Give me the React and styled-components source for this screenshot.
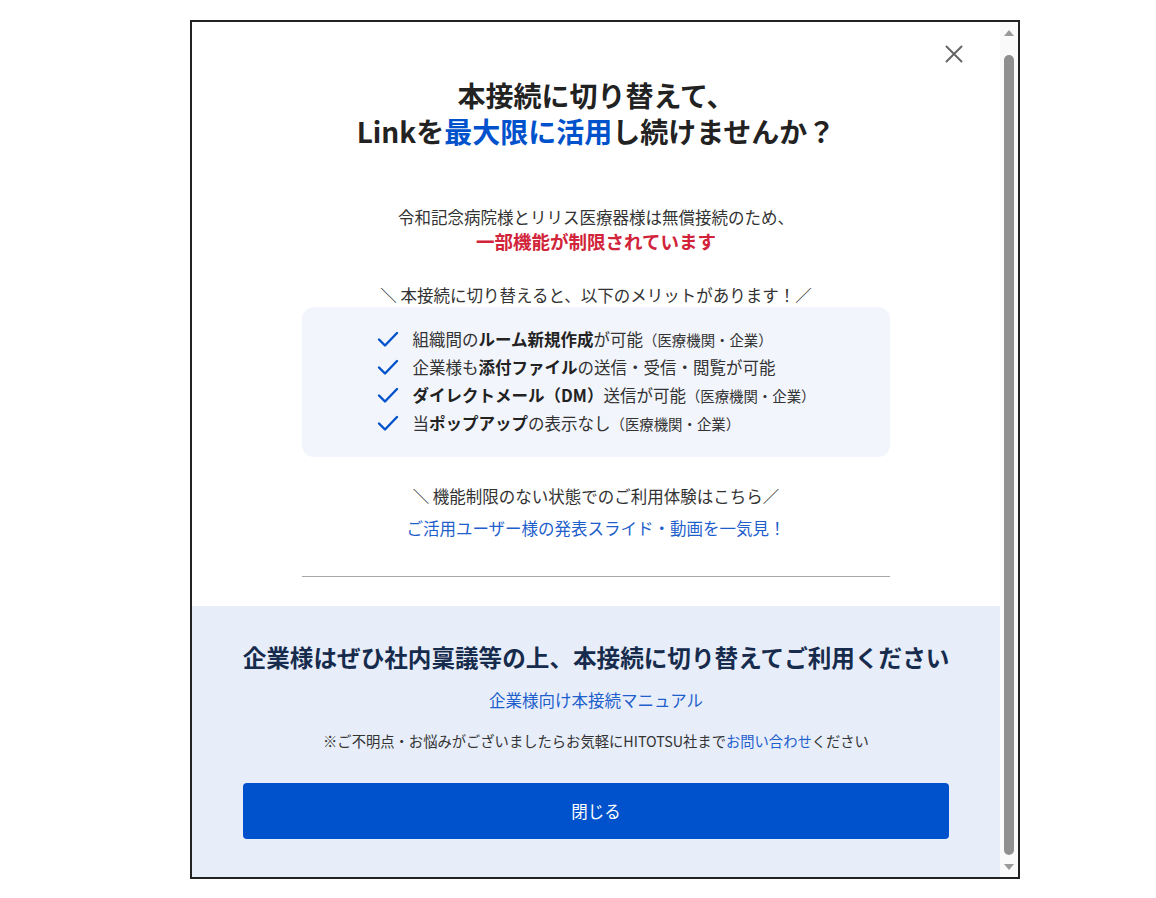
import React from "react";
import styled, { createGlobalStyle } from "styled-components";

const Global = createGlobalStyle`
  html, body { margin: 0; padding: 0; background: #fff; }
  body { font-family: "Noto Sans CJK JP", "Noto Sans", sans-serif; color: #333; }
  * { box-sizing: border-box; }
`;

const Modal = styled.div`
  margin: 20px 0 0 190px;
  width: 830px;
  height: 859px;
  border: 2px solid #222;
  display: flex;
  background: #fff;
  overflow: hidden;
`;

const Content = styled.div`
  flex: 1;
  min-width: 0;
  position: relative;
  display: flex;
  flex-direction: column;
`;

const Top = styled.section`
  padding: 55px 110px 0;
  display: flex;
  flex-direction: column;
  align-items: center;
  text-align: center;
`;

const CloseButton = styled.button`
  position: absolute;
  top: 22px;
  right: 36px;
  width: 20px;
  height: 20px;
  padding: 0;
  border: 0;
  background: transparent;
  cursor: pointer;
  display: flex;
  align-items: center;
  justify-content: center;
`;

const Title = styled.h1`
  margin: 0;
  font-size: 28px;
  line-height: 36px;
  font-weight: 700;
  color: #222;
`;

const Accent = styled.span`
  color: #0052cc;
`;

const Lead = styled.p`
  margin: 56px 0 0;
  font-size: 16.5px;
  line-height: 24px;
  color: #333;
`;

const Warn = styled.strong`
  display: block;
  font-size: 18.5px;
  color: #d1243a;
  font-weight: 700;
`;

const Caption = styled.p`
  margin: ${(p) => p.$mt || 0}px 0 0;
  font-size: 16.5px;
  line-height: 24px;
  color: #333;
`;

const MeritBox = styled.div`
  align-self: stretch;
  background: #f2f5fc;
  border-radius: 12px;
  padding: 18px 0 20px;
  display: flex;
  justify-content: center;
`;

const MeritList = styled.ul`
  list-style: none;
  margin: 0;
  padding: 0;
  text-align: left;
`;

const Merit = styled.li`
  height: 28px;
  display: flex;
  align-items: center;
  gap: 14px;
  font-size: 16.5px;
  line-height: 28px;
  color: #333;
  b { font-weight: 700; color: #222; }
`;

const Small = styled.span`
  font-size: 14.4px;
  line-height: 1;
  color: #333;
`;

const TextLink = styled.a`
  color: #1f5fcc;
  text-decoration: none;
  cursor: pointer;
`;

const BlockLink = styled(TextLink)`
  display: block;
  margin-top: ${(p) => p.$mt || 0}px;
  font-size: 16.5px;
  line-height: 24px;
`;

const Divider = styled.hr`
  align-self: stretch;
  margin: 36px 0 0;
  border: 0;
  border-top: 1px solid #a8a8a8;
`;

const Bottom = styled.section`
  margin-top: 29px;
  flex: 1;
  background: #e7eefa;
  padding: 34px 51px 0;
  display: flex;
  flex-direction: column;
  align-items: center;
  text-align: center;
`;

const Heading = styled.h2`
  margin: 0;
  font-size: 23.6px;
  line-height: 34px;
  font-weight: 700;
  color: #172b4d;
  white-space: nowrap;
`;

const Note = styled.p`
  margin: 19px 0 0;
  font-size: 14.3px;
  line-height: 20px;
  color: #333;
`;

const PrimaryButton = styled.button`
  margin-top: 32px;
  align-self: stretch;
  height: 56px;
  border: 0;
  border-radius: 4px;
  background: #0052cc;
  color: #fff;
  font-family: inherit;
  font-size: 16.5px;
  cursor: pointer;
`;

const Scrollbar = styled.div`
  flex: none;
  width: 18px;
  background: #fafafa;
  display: flex;
  flex-direction: column;
  align-items: center;
  padding: 8px 0 7px;
`;

const Arrow = styled.div`
  width: 0;
  height: 0;
  border-left: 5px solid transparent;
  border-right: 5px solid transparent;
  ${(p) =>
    p.$down
      ? "border-top: 6px solid #9a9a9a;"
      : "border-bottom: 6px solid #9a9a9a;"}
`;

const Thumb = styled.div`
  flex: 1;
  width: 10px;
  margin: 19px 0 9px;
  border-radius: 5px;
  background: #8f8f8f;
`;

const Check = () => (
  <svg width="22" height="18" viewBox="0 0 22 18" fill="none">
    <path d="M2 9.5 L8 15.5 L20 3" stroke="#0052cc" strokeWidth="2.4" strokeLinecap="round" strokeLinejoin="round" />
  </svg>
);

const merits = [
  [<>組織間の<b>ルーム新規作成</b>が可能</>, true],
  [<>企業様も<b>添付ファイル</b>の送信・受信・閲覧が可能</>, false],
  [<><b>ダイレクトメール（DM）</b>送信が可能</>, true],
  [<>当<b>ポップアップ</b>の表示なし</>, true],
];

export default function App() {
  return (
    <>
      <Global />
      <Modal>
        <Content>
          <CloseButton aria-label="閉じる">
            <svg width="18" height="18" viewBox="0 0 18 18">
              <path d="M1.5 1.5 L16.5 16.5 M16.5 1.5 L1.5 16.5" stroke="#666" strokeWidth="2" strokeLinecap="round" />
            </svg>
          </CloseButton>
          <Top>
            <Title>
              本接続に切り替えて、
              <br />
              Linkを<Accent>最大限に活用</Accent>し続けませんか？
            </Title>
            <Lead>
              令和記念病院様とリリス医療器様は無償接続のため、
              <Warn>一部機能が制限されています</Warn>
            </Lead>
            <Caption $mt={30}>＼ 本接続に切り替えると、以下のメリットがあります！／</Caption>
            <MeritBox>
              <MeritList>
                {merits.map(([text, scope], i) => (
                  <Merit key={i}>
                    <Check />
                    <span>
                      {text}
                      {scope && <Small>（医療機関・企業）</Small>}
                    </span>
                  </Merit>
                ))}
              </MeritList>
            </MeritBox>
            <Caption $mt={27}>＼ 機能制限のない状態でのご利用体験はこちら／</Caption>
            <BlockLink $mt={8}>ご活用ユーザー様の発表スライド・動画を一気見！</BlockLink>
            <Divider />
          </Top>
          <Bottom>
            <Heading>企業様はぜひ社内稟議等の上、本接続に切り替えてご利用ください</Heading>
            <BlockLink $mt={14}>企業様向け本接続マニュアル</BlockLink>
            <Note>
              ※ご不明点・お悩みがございましたらお気軽にHITOTSU社まで
              <TextLink>お問い合わせ</TextLink>ください
            </Note>
            <PrimaryButton>閉じる</PrimaryButton>
          </Bottom>
        </Content>
        <Scrollbar>
          <Arrow />
          <Thumb />
          <Arrow $down />
        </Scrollbar>
      </Modal>
    </>
  );
}
